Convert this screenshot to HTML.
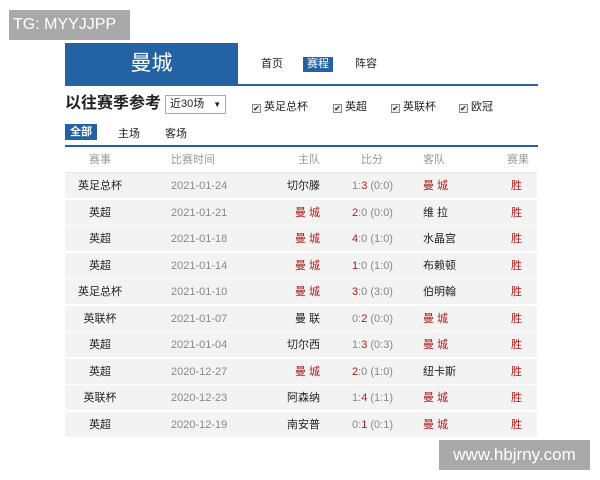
<!DOCTYPE html>
<html><head><meta charset="utf-8"><style>
*{margin:0;padding:0;box-sizing:border-box}
body{width:600px;height:480px;background:#fff;position:relative;overflow:hidden;font-family:"Liberation Sans","Noto Sans CJK SC",sans-serif;font-size:11px;color:#222}
.a{position:absolute}
.tg{left:9px;top:10px;width:121px;height:30px;background:#a9a9a9;color:#fff;font-size:16px;line-height:30px;padding-left:4px}
.wm{left:439px;top:440px;width:151px;height:30px;background:#a9a9a9;color:#fff;font-size:17px;line-height:30px;text-align:center}
.hd{left:65px;top:43px;width:173px;height:42px;background:#2362a3;color:#fff;font-size:21px;line-height:42px;text-align:center}
.line{left:65px;top:84px;width:473px;height:2px;background:#2362a3}
.nav{top:57px;font-size:11px;line-height:15px}
.on{background:#2362a3;color:#fff;padding:0 4px}
.cb{display:inline-block;width:9px;height:9px;border:1px solid #888;background:#eee;vertical-align:-1px;margin-right:3px;font-size:8px;line-height:8px;text-align:center}
.row{position:absolute;left:65px;width:472px;height:26px;background:#f3f3f3;border-bottom:1px solid #fff;line-height:26px;font-size:11px}
.row span{position:absolute}
.r{color:#b01c1c}
.g{color:#888}
</style></head><body>
<div class="a tg">TG: MYYJJPP</div>
<div class="a hd">曼城</div>
<div class="a line"></div>
<div class="a nav" style="left:261px">首页</div>
<div class="a nav on" style="left:303px">赛程</div>
<div class="a nav" style="left:355px">阵容</div>
<div class="a" style="left:65px;top:94px;font-size:16px;font-weight:bold;line-height:20px">以往赛季参考</div>
<div class="a" style="left:165px;top:95px;width:61px;height:19px;border:1px solid #aaa;font-size:11px;line-height:17px;padding-left:4px">近30场 <span style="font-size:8px;margin-left:6px">▼</span></div>
<div class="a" style="left:252px;top:98px;font-size:11px"><span class="cb">✔</span>英足总杯</div>
<div class="a" style="left:333px;top:98px;font-size:11px"><span class="cb">✔</span>英超</div>
<div class="a" style="left:391px;top:98px;font-size:11px"><span class="cb">✔</span>英联杯</div>
<div class="a" style="left:459px;top:98px;font-size:11px"><span class="cb">✔</span>欧冠</div>
<div class="a on" style="left:65px;top:124px;height:16px;line-height:16px;font-size:11px;font-weight:bold;padding:0 5px">全部</div>
<div class="a" style="left:118px;top:125px">主场</div>
<div class="a" style="left:165px;top:125px">客场</div>
<div class="a" style="left:65px;top:145px;width:473px;height:2px;background:#2362a3"></div>
<div class="row" style="top:147px;background:#fff;border-bottom:1px solid #e6e6e6;color:#999">
<span style="left:24px">赛事</span><span style="left:106px">比赛时间</span><span style="left:233px">主队</span><span style="left:296px">比分</span><span style="left:358px">客队</span><span style="left:442px">赛果</span></div>
<div id="t"></div>
<div class="a wm">www.hbjrny.com</div>
<script>
var d=[["英足总杯","2021-01-24","切尔滕",0,"1:<b>3</b> (0:0)","曼 城",1],
["英超","2021-01-21","曼 城",1,"<b>2</b>:0 (0:0)","维 拉",0],
["英超","2021-01-18","曼 城",1,"<b>4</b>:0 (1:0)","水晶宫",0],
["英超","2021-01-14","曼 城",1,"<b>1</b>:0 (1:0)","布赖顿",0],
["英足总杯","2021-01-10","曼 城",1,"<b>3</b>:0 (3:0)","伯明翰",0],
["英联杯","2021-01-07","曼 联",0,"0:<b>2</b> (0:0)","曼 城",1],
["英超","2021-01-04","切尔西",0,"1:<b>3</b> (0:3)","曼 城",1],
["英超","2020-12-27","曼 城",1,"<b>2</b>:0 (1:0)","纽卡斯",0],
["英联杯","2020-12-23","阿森纳",0,"1:<b>4</b> (1:1)","曼 城",1],
["英超","2020-12-19","南安普",0,"0:<b>1</b> (0:1)","曼 城",1]];
var h="";d.forEach(function(r,i){var top=173+i*26.5;
h+='<div class="row" style="top:'+top+'px"><span style="left:0;width:70px;text-align:center">'+r[0]+'</span><span class="g" style="left:106px">'+r[1]+'</span><span class="'+(r[3]?'r':'')+'" style="right:217px">'+r[2]+'</span><span class="g" style="left:287px">'+r[4].replace(/<b>/g,'<b style="font-weight:normal;color:#b01c1c;position:static">')+'</span><span class="'+(r[6]?'r':'')+'" style="left:358px">'+r[5]+'</span><span class="r" style="left:446px">胜</span></div>';});
document.getElementById("t").innerHTML=h;
</script>
</body></html>
